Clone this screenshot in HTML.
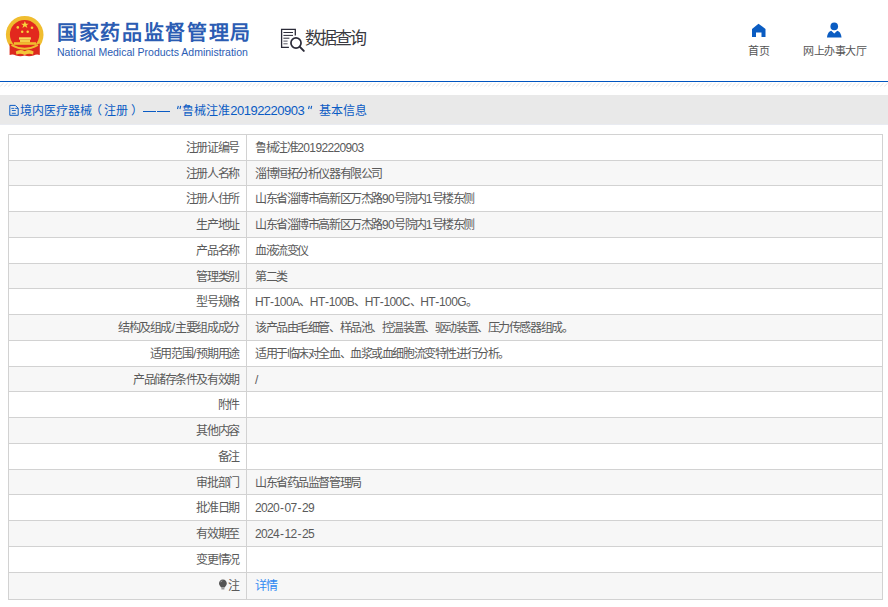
<!DOCTYPE html>
<html lang="zh-CN">
<head>
<meta charset="utf-8">
<style>
html,body{margin:0;padding:0;background:#fff;}
body{width:888px;height:607px;overflow:hidden;position:relative;font-family:"Liberation Sans",sans-serif;}
.abs{position:absolute;white-space:nowrap;}
#emblem{left:0;top:0;width:50px;height:60px;}
#cn{left:57px;top:19px;font-size:20px;font-weight:bold;color:#2b5cb3;letter-spacing:1.65px;line-height:29px;}
#en{left:57px;top:46px;font-size:10.5px;color:#2b5cb3;line-height:12px;}
#sicon{left:279px;top:27px;width:27px;height:26px;}
#sq{left:304.5px;top:27px;font-size:17px;color:#3a3a40;letter-spacing:-1.8px;line-height:24px;}
#home{left:751px;top:23px;width:15px;height:15px;}
#person{left:826px;top:22px;width:16.5px;height:16px;}
#t-home{left:748px;top:43.5px;font-size:11px;color:#555;letter-spacing:-0.4px;line-height:14px;}
#t-wsb{left:803px;top:43.5px;font-size:11px;color:#555;letter-spacing:-0.4px;line-height:14px;}
#bline{left:0;top:81px;width:888px;height:1px;background:#0055c0;}
#hatch{left:0;top:82px;width:888px;height:5px;}
#band{left:0;top:95px;width:888px;height:29px;background:#e9e9e9;border-bottom:1px solid #e9ebf1;}
#ticon{left:9px;top:104px;width:11px;height:13px;}
.tt{position:absolute;top:103px;font-size:12px;color:#0a5bc4;line-height:16px;white-space:nowrap;}
.q{font-size:13px;top:104.5px;}
.dash{position:absolute;top:111px;height:1px;background:#0a5bc4;}
.row{position:absolute;left:8px;width:874px;}
.hl{position:absolute;left:8px;width:875px;height:1px;background:#d2d2d2;}
.vl{position:absolute;width:1px;background:#d2d2d2;}
.lab{position:absolute;right:649.3px;font-size:12px;letter-spacing:-1.425px;color:#5a5a5a;line-height:16px;white-space:nowrap;}
.val{position:absolute;left:255px;font-size:12px;color:#5a5a5a;line-height:16px;white-space:nowrap;}
.cj{letter-spacing:-1.425px;}
.dg{font-size:12px;letter-spacing:-0.65px;}
.hy{margin:0 1px;}
.hy2{margin:0 0.4px;}
.dl{font-size:12px;letter-spacing:0.1px;margin-left:0.75px;}
.lk{letter-spacing:-1.425px;color:#3189f2;}
.bulb{display:inline-block;width:8px;height:9px;margin-right:1px;vertical-align:-1px;background:#555;border-radius:50% 50% 45% 45%;}
</style>
</head>
<body>
<svg id="emblem" class="abs" viewBox="0 0 50 60">
  <circle cx="24.7" cy="34.7" r="18.8" fill="#f0bd2f"/>
  <circle cx="24.6" cy="34.6" r="14.7" fill="#e2281e"/>
  <path d="M9.6 43.5 Q24.7 50.5 39.8 43.5 L39.8 55 Q36.5 53.8 33.5 55.6 Q29 57 24.7 55.6 Q20.4 57 15.9 55.6 Q12.9 53.8 9.6 55 Z" fill="#dc2a1e"/>
  <path d="M11.5 45 Q24.7 52.5 37.9 45" fill="none" stroke="#f0bd2f" stroke-width="2"/>
  <path d="M15.8 51.5 Q20 48.6 24.7 51.2 Q29.4 48.6 33.6 51.5 L33 54.6 Q29 52.6 24.7 55 Q20.4 52.6 16.4 54.6 Z" fill="#f3c53a"/>
  <polygon points="24.9,21 25.95,23.65 28.75,23.65 26.5,25.3 27.35,28 24.9,26.35 22.45,28 23.3,25.3 21.05,23.65 23.85,23.65" fill="#f7d43c"/>
  <circle cx="17.8" cy="27.4" r="1.3" fill="#f7d43c"/>
  <circle cx="32" cy="27.8" r="1.3" fill="#f7d43c"/>
  <circle cx="22.2" cy="31.8" r="1.25" fill="#f7d43c"/>
  <circle cx="27.7" cy="31.8" r="1.25" fill="#f7d43c"/>
  <rect x="19" y="37.3" width="11.9" height="2.3" fill="#f9dc5a"/>
  <rect x="20" y="39.6" width="10" height="2.8" fill="#f6d04a"/>
  <rect x="13.9" y="42.2" width="22.1" height="2.6" fill="#f0bd2f"/>
</svg>
<div id="cn" class="abs">国家药品监督管理局</div>
<div id="en" class="abs">National Medical Products Administration</div>

<svg id="sicon" class="abs" viewBox="0 0 27 26">
  <path d="M16.3 8.6 V2.3 H2.6 V20.3 H9.9" fill="none" stroke="#2b2b38" stroke-width="1.3"/>
  <path d="M4.4 5.5 H14 M4.4 8.4 H14 M4.4 11.2 H10.4" stroke="#2b2b38" stroke-width="1"/>
  <path d="M4.4 14.1 H8.6 M4.4 16.8 H8.6" stroke="#5a5a66" stroke-width="1"/>
  <circle cx="17" cy="16" r="5.05" fill="none" stroke="#2b2b38" stroke-width="1.7"/>
  <path d="M21.1 20.1 L24.8 23.9" stroke="#2b2b38" stroke-width="2" stroke-linecap="round"/>
</svg>
<div id="sq" class="abs">数据查询</div>

<svg id="home" class="abs" viewBox="0 0 15 15">
  <path d="M7.5 0.7 L14.5 6 V14 H10.5 V9.5 H5 V14 H1 V6 Z" fill="#0a5cc2"/>
</svg>
<div id="t-home" class="abs">首页</div>
<svg id="person" class="abs" viewBox="0 0 16 16">
  <circle cx="8" cy="4.4" r="3.8" fill="#0a5cc2"/>
  <path d="M0.7 15.5 Q1.5 9.5 5 8.8 L8 11.5 L11 8.8 Q14.5 9.5 15.3 15.5 Z" fill="#0a5cc2"/>
</svg>
<div id="t-wsb" class="abs">网上办事大厅</div>

<div id="bline" class="abs"></div>
<svg id="hatch" class="abs" width="888" height="5"><defs><pattern id="hp" patternUnits="userSpaceOnUse" width="4" height="5"><path d="M0.2 4.4 L3.6 1.2" stroke="#e4e4e4" stroke-width="1"/></pattern></defs><rect width="888" height="5" fill="url(#hp)"/></svg>

<div id="band" class="abs"></div>
<svg id="ticon" class="abs" viewBox="0 0 11 13">
  <path d="M0.8 1.4 H6.3 L9.2 4.3 V11.3 H0.8 Z" fill="none" stroke="#0a5bc4" stroke-width="1"/>
  <path d="M2.3 4.4 H5.3 M6.2 4.4 H9 M2.8 6.5 H6.8 M2.8 9.3 H6.8" stroke="#0a5bc4" stroke-width="0.9"/>
</svg>
<div class="tt" style="left:19.7px">境内医疗器械</div>
<div class="tt" style="left:90.2px">（</div>
<div class="tt" style="left:103.5px">注册</div>
<div class="tt" style="left:131.2px">）</div>
<div class="dash" style="left:143px;width:13px"></div><div class="dash" style="left:156.6px;width:13.4px"></div>
<svg class="abs" style="left:176px;top:105px" width="6" height="5" viewBox="0 0 6 5"><path d="M2.3 0.9 L1.5 4 M4.7 0.9 L3.9 4" stroke="#0a5bc4" stroke-width="1.1"/></svg>
<div class="tt" style="left:181.8px">鲁械注准</div>
<div class="tt" style="left:230.3px;top:102.5px;font-size:13px;letter-spacing:-0.52px">20192220903</div>
<svg class="abs" style="left:306.5px;top:105px" width="6" height="5" viewBox="0 0 6 5"><path d="M2.3 0.9 L1.5 4 M4.7 0.9 L3.9 4" stroke="#0a5bc4" stroke-width="1.1"/></svg>
<div class="tt" style="left:318.6px">基本信息</div>

<div class="row" style="top:134px;height:26px;background:#fff"></div>
<div class="lab" style="top:139.60px">注册证编号</div>
<div class="val" style="top:139.60px"><span class="cj">鲁械注准</span><span class="dg">20192220903</span></div>
<div class="row" style="top:160px;height:25px;background:#f7f7f7"></div>
<div class="lab" style="top:165.60px">注册人名称</div>
<div class="val" style="top:165.60px"><span class="cj">淄博恒拓分析仪器有限公司</span></div>
<div class="row" style="top:185px;height:26px;background:#fff"></div>
<div class="lab" style="top:190.60px">注册人住所</div>
<div class="val" style="top:190.60px"><span class="cj">山东省淄博市高新区万杰路</span><span class="dg">90</span><span class="cj">号院内</span><span class="dg">1</span><span class="cj">号楼东侧</span></div>
<div class="row" style="top:211px;height:26px;background:#f7f7f7"></div>
<div class="lab" style="top:216.60px">生产地址</div>
<div class="val" style="top:216.60px"><span class="cj">山东省淄博市高新区万杰路</span><span class="dg">90</span><span class="cj">号院内</span><span class="dg">1</span><span class="cj">号楼东侧</span></div>
<div class="row" style="top:237px;height:26px;background:#fff"></div>
<div class="lab" style="top:242.60px">产品名称</div>
<div class="val" style="top:242.60px"><span class="cj">血液流变仪</span></div>
<div class="row" style="top:263px;height:25px;background:#f7f7f7"></div>
<div class="lab" style="top:268.60px">管理类别</div>
<div class="val" style="top:268.60px"><span class="cj">第二类</span></div>
<div class="row" style="top:288px;height:26px;background:#fff"></div>
<div class="lab" style="top:293.60px">型号规格</div>
<div class="val" style="top:293.60px"><span class="dg">HT<span class="hy2">-</span>100A</span><span class="cj">、</span><span class="dg">HT<span class="hy2">-</span>100B</span><span class="cj">、</span><span class="dg">HT<span class="hy2">-</span>100C</span><span class="cj">、</span><span class="dg">HT<span class="hy2">-</span>100G</span><span class="cj">。</span></div>
<div class="row" style="top:314px;height:26px;background:#f7f7f7"></div>
<div class="lab" style="top:319.60px">结构及组成<span class="dl">/</span>主要组成成分</div>
<div class="val" style="top:319.60px"><span class="cj">该产品由毛细管、样品池、控温装置、驱动装置、压力传感器组成。</span></div>
<div class="row" style="top:340px;height:26px;background:#fff"></div>
<div class="lab" style="top:345.60px">适用范围<span class="dl">/</span>预期用途</div>
<div class="val" style="top:345.60px"><span class="cj">适用于临床对全血、血浆或血细胞流变特性进行分析。</span></div>
<div class="row" style="top:366px;height:25px;background:#f7f7f7"></div>
<div class="lab" style="top:371.60px">产品储存条件及有效期</div>
<div class="val" style="top:371.60px"><span class="dg">/</span></div>
<div class="row" style="top:391px;height:26px;background:#fff"></div>
<div class="lab" style="top:396.60px">附件</div>
<div class="row" style="top:417px;height:26px;background:#f7f7f7"></div>
<div class="lab" style="top:422.60px">其他内容</div>
<div class="row" style="top:443px;height:26px;background:#fff"></div>
<div class="lab" style="top:448.60px">备注</div>
<div class="row" style="top:469px;height:25px;background:#f7f7f7"></div>
<div class="lab" style="top:474.60px">审批部门</div>
<div class="val" style="top:474.60px"><span class="cj">山东省药品监督管理局</span></div>
<div class="row" style="top:494px;height:26px;background:#fff"></div>
<div class="lab" style="top:499.60px">批准日期</div>
<div class="val" style="top:499.60px"><span class="dg">2020<span class="hy">-</span>07<span class="hy">-</span>29</span></div>
<div class="row" style="top:520px;height:26px;background:#f7f7f7"></div>
<div class="lab" style="top:525.60px">有效期至</div>
<div class="val" style="top:525.60px"><span class="dg">2024<span class="hy">-</span>12<span class="hy">-</span>25</span></div>
<div class="row" style="top:546px;height:26px;background:#fff"></div>
<div class="lab" style="top:551.60px">变更情况</div>
<div class="row" style="top:572px;height:27px;background:#f7f7f7"></div>
<div class="lab" style="top:577.60px">注</div>
<div class="val" style="top:577.60px"><span class="lk">详情</span></div>
<div class="hl" style="top:134px"></div>
<div class="hl" style="top:160px"></div>
<div class="hl" style="top:185px"></div>
<div class="hl" style="top:211px"></div>
<div class="hl" style="top:237px"></div>
<div class="hl" style="top:263px"></div>
<div class="hl" style="top:288px"></div>
<div class="hl" style="top:314px"></div>
<div class="hl" style="top:340px"></div>
<div class="hl" style="top:366px"></div>
<div class="hl" style="top:391px"></div>
<div class="hl" style="top:417px"></div>
<div class="hl" style="top:443px"></div>
<div class="hl" style="top:469px"></div>
<div class="hl" style="top:494px"></div>
<div class="hl" style="top:520px"></div>
<div class="hl" style="top:546px"></div>
<div class="hl" style="top:572px"></div>
<div class="hl" style="top:599px"></div>
<svg class="abs" style="left:218px;top:579px" width="10" height="11" viewBox="0 0 10 11"><path d="M4.9 0.5 C7.3 0.5 8.8 2.3 8.8 4.4 C8.8 6 7.6 7 6.6 8.6 H3.2 C2.2 7 1 6 1 4.4 C1 2.3 2.5 0.5 4.9 0.5 Z" fill="#555"/><rect x="3.4" y="8.8" width="3" height="1.7" fill="#9a9a9a"/><path d="M2.7 3.2 Q3.2 2 4.3 1.8" stroke="#bbb" stroke-width="0.8" fill="none"/></svg>
<div class="vl" style="left:246px;top:134px;height:465px"></div>
<div class="vl" style="left:8px;top:134px;height:466px"></div>
<div class="vl" style="left:882px;top:134px;height:466px"></div>
</body>
</html>
